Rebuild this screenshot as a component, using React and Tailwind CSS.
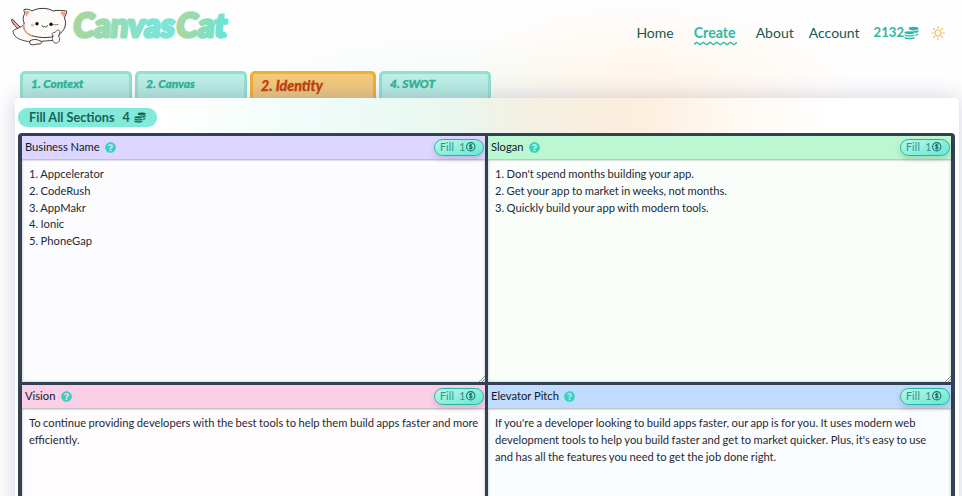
import React from "react";
import { FaQuestionCircle } from "react-icons/fa";

function Cat() {
  return (
    <svg viewBox="0 0 60 42" className="h-[42px] w-[60px] shrink-0" fill="#fdfbfa" stroke="#3f3232" strokeWidth="1" strokeLinejoin="round" strokeLinecap="round">
      <path d="M8 24C6 21 3 20 2.500 17C.5 15 1.500 13 3.500 15C5 18 7 18 10 22" fill="#f3b5a8" />
      <path d="M15 19C11 23 4 24 3 26C3 33 12 36 22 37L48 35L50 24Z" strokeWidth=".9" />
      <path d="M14 18C12 13 14 10 15 8C14 6 13.500 5 14 4.500C18 3.500 20 5 22 6C28 2.500 38 2.500 43 6C47 5 52 5.500 56.500 6C57 8 55 10 54.500 13C57 19 55 26 48 30C40 34 25 33 18 29C14 26 13 22 14 18Z" />
      <path d="M15 6L20 6.500L16 12Z" fill="#f79a88" stroke="none" />
      <path d="M55.500 7L50 7L54 12.500Z" fill="#f79a88" stroke="none" />
      <path d="M13.800 18C12.500 23 15 28 22 31.200" stroke="#f0937b" fill="none" strokeWidth="1.300" />
      <path d="M20 36C18 40 23 40.500 27 39C32 39.500 33 37 30 36C27 34 22 34 20 36Z" />
      <path d="M43 31C41 30 42 27 45 27.500C47 24 50 25 50 27L48.500 31C51 35 49 38.500 45 38C42 37 42 33 43 31Z" strokeWidth=".8" />
      <path d="M32 20.500C32.500 22.500 34 22.500 34.500 21C35.500 22.500 37 22.500 37.500 20.500" fill="none" strokeWidth=".9" />
      <path d="M41 20L48 19.500" fill="none" strokeWidth=".6" />
      <circle cx="27" cy="18.800" r="1.700" fill="#111" stroke="none" />
      <circle cx="41" cy="19.200" r="1.700" fill="#111" stroke="none" />
      <ellipse cx="22.500" cy="20" rx="2" ry="1.500" fill="#ffb7b3" stroke="none" />
    </svg>
  );
}

function Coins({ className }) {
  return (
    <svg viewBox="0 0 16 14" className={className} fill="currentColor">
      <ellipse cx="10.200" cy="2.300" rx="5.300" ry="1.900" />
      <path d="M15.600 3.800V5.200C15.300 6.200 13.800 6.800 12 7.100C11.500 6 10.200 5.400 8.500 5C11.500 5.300 14.500 4.800 15.600 3.800Z" />
      <path d="M15.300 7V8.300C15 9.200 13.800 9.900 12.200 10.200V8.600C13.600 8.300 14.800 7.700 15.300 7Z" />
      <ellipse cx="5.800" cy="6.700" rx="5.300" ry="1.500" />
      <path d="M.5 8.300C2.500 9.700 9.200 9.700 11.200 8.300V9.500C10 11.300 1.700 11.300 .5 9.500Z" />
      <path d="M.5 11.100C2.500 12.500 9.200 12.500 11.200 11.100V12.200C10 14.300 1.700 14.300 .5 12.200Z" />
    </svg>
  );
}

function Sun() {
  return (
    <svg viewBox="0 0 14 14" className="ml-[12px] size-[14px]" fill="none" stroke="#f2bc55" strokeWidth="1.100" strokeLinecap="round">
      <circle cx="7" cy="7" r="3" />
      <path d="M7 .6V2.200M7 11.800V13.400M.6 7H2.200M11.800 7H13.400M2.500 2.500L3.500 3.500M10.500 10.500L11.500 11.500M2.500 11.500L3.500 10.500M10.500 3.500L11.500 2.500" />
    </svg>
  );
}

function Coin() {
  return (
    <svg viewBox="0 0 16 16" className="size-[9.500px]" fill="none" stroke="#1d6f66" strokeWidth="1.800">
      <circle cx="8" cy="8" r="7" />
      <path d="M10.500 5.700C9.500 4.400 5.800 4.500 5.800 6.400C5.800 8.400 10.400 7.500 10.400 9.700C10.400 11.700 6.500 11.700 5.400 10.200M8 3.300V12.700" />
    </svg>
  );
}

function Logo() {
  return (
    <svg viewBox="0 0 164 44" className="h-11 w-[164px] overflow-visible">
      <defs>
        <linearGradient id="word" gradientUnits="userSpaceOnUse" x1="4" y1="0" x2="108" y2="0">
          <stop offset=".1" stopColor="#a8d6a0" />
          <stop offset=".75" stopColor="#7fe3d3" />
          <stop offset="1" stopColor="#7be5d8" />
        </linearGradient>
        <linearGradient id="word2" gradientUnits="userSpaceOnUse" x1="110" y1="0" x2="161" y2="0">
          <stop offset=".1" stopColor="#a5d8a4" />
          <stop offset="1" stopColor="#66e6d9" />
        </linearGradient>
      </defs>
      <g transform="skewX(-6)" fontFamily="Lato, sans-serif" fontWeight="900" fontSize="33" strokeWidth="3" strokeLinejoin="round">
        <text x="6" y="32.300" textLength="101" lengthAdjust="spacingAndGlyphs" fill="url(#word)" stroke="url(#word)">Canvas</text>
        <text x="109" y="32.300" textLength="50" lengthAdjust="spacingAndGlyphs" fill="url(#word2)" stroke="url(#word2)">Cat</text>
      </g>
    </svg>
  );
}

function Tab({ label, active }) {
  return (
    <div
      className={
        active
          ? "h-7 w-[126px] rounded-t-[5px] border-[3px] border-b-0 border-[#f0ad38] bg-linear-to-b from-[#f5cb7b] to-[#e9c47e] pt-[4px] pl-2 text-[14.200px] leading-[16px] font-black text-[#c2410c] italic [-webkit-text-stroke:0.300px_#c2410c]"
          : "h-7 w-[112px] rounded-t-[5px] border-[3px] border-b-0 border-[#91dfcf] bg-linear-to-b from-[#bdf1e8] to-[#b2e5dc] pt-[3px] pl-2 text-[11.900px] leading-[14px] font-black text-[#2cb596] italic [-webkit-text-stroke:0.300px_#2cb596]"
      }
    >
      {label}
    </div>
  );
}

function Section({ title, head, body, text, last }) {
  return (
    <section className="flex min-w-0 flex-col">
      <header className={"z-10 flex h-[23px] items-center pr-[1.500px] pb-px pl-[3px] shadow-[0_1px_2px_rgba(0,0,0,0.22)] " + head}>
        <h2 className="text-[11.200px] leading-4 text-[#111827]">{title}</h2>
        <FaQuestionCircle className="ml-[5.500px] size-[11px] text-[#35d2c0]" />
        <button className="ml-auto flex h-[17px] w-[50px] items-center rounded-full border-[1.500px] border-[#29b5a4] bg-linear-to-br from-[#b5f8e9] to-[#62e8d3] pl-[5.500px] text-[10.500px] leading-3 text-[#3a8f86] shadow-[0_3px_6px_rgba(0,0,0,0.14)]">
          <span className="mr-[5px] tracking-[0.200px]">Fill</span>
          <span className="mr-px">1</span>
          <Coin />
        </button>
      </header>
      <div className={"relative flex-1 pt-[7px] pl-[7px] text-[11.200px] leading-[16.800px] [word-spacing:-0.380px] whitespace-pre text-[#1f2937] shadow-[inset_0_0_3px_rgba(0,0,0,0.25)] " + body}>
        {text}
        {!last && (
          <svg viewBox="0 0 6 6" className="absolute right-0 bottom-0 size-[6px]" stroke="#777" strokeWidth=".8">
            <path d="M0 6L6 0M3 6L6 3" />
          </svg>
        )}
      </div>
    </section>
  );
}

export default function App() {
  return (
    <div className="flex h-[496px] w-[962px] flex-col overflow-hidden bg-[#fefefe] bg-[radial-gradient(ellipse_220px_110px_at_640px_110px,rgba(255,238,218,0.75),transparent),radial-gradient(ellipse_230px_100px_at_440px_130px,rgba(220,248,240,0.6),transparent)] font-['Lato',sans-serif]">
      <header className="flex h-[70px] shrink-0 items-start pl-[10px]">
        <div className="flex pt-[5px]">
          <Cat />
          <Logo />
        </div>
        <nav className="ml-auto flex h-[65px] items-center pr-[17px] text-[14px] text-[#19584f]">
          <a className="mr-5">Home</a>
          <a className="relative mr-5 text-[14.200px] font-bold text-[#2cbaa5]">
            Create
            <svg viewBox="0 0 43 5" className="absolute top-[19px] left-0 h-[5px] w-[43px]" fill="none" stroke="#2cbaa5" strokeWidth="1.400">
              <path d="M0 3.500L2.500 1.200L5.900 3.800L9.300 1.200L12.700 3.800L16.100 1.200L19.500 3.800L22.900 1.200L26.300 3.800L29.700 1.200L33.100 3.800L36.500 1.200L39.900 3.800L43 1.400" strokeLinejoin="round" />
            </svg>
          </a>
          <a className="mr-[15px]">About</a>
          <a className="mr-[14px]">Account</a>
          <span className="flex items-center pt-px text-[13.100px] font-bold text-[#2cb7a2]">2132<Coins className="h-[14px] w-[15px]" /></span>
          <Sun />
        </nav>
      </header>
      <div className="mt-px flex h-7 shrink-0 gap-[3px] pl-5">
        <Tab label="1. Context" />
        <Tab label="2. Canvas" />
        <Tab label="2. Identity" active />
        <Tab label="4. SWOT" />
      </div>
      <main className="-mt-px ml-[15px] flex h-[420px] w-[944px] shrink-0 flex-col rounded-[4px] bg-white bg-[linear-gradient(90deg,#fff_15%,#effcf9_32%,#e9f7f0_46%,#f4f0e2_55%,#fdeedd_66%,#fff9f2_76%,#fff_86%)] pl-[3px] shadow-[0_0_22px_rgba(75,70,140,0.25)]">
        <button className="mt-[10px] flex h-[19px] w-[139px] shrink-0 items-center rounded-[9px] bg-[#83ead9] pl-[11px] text-[12.700px] font-bold text-[#176358]">
          Fill All Sections <span className="ml-2">4</span><Coins className="ml-1 h-[11px] w-[12px]" />
        </button>
        <div className="mt-[6px] grid h-[500px] w-[937px] shrink-0 grid-cols-[463px_463px] grid-rows-[246px_246px] gap-[3px] rounded-[4px] border-4 border-t-[3px] border-[#334155] bg-[#334155]">
          <Section title="Business Name" head="bg-[#ddd6fe]" body="bg-[#fcfcff]" text={"1. Appcelerator\n2. CodeRush\n3. AppMakr\n4. Ionic\n5. PhoneGap"} />
          <Section title="Slogan" head="bg-[#bbf7d0]" body="bg-[#f9fefb]" text={"1. Don't spend months building your app.\n2. Get your app to market in weeks, not months.\n3. Quickly build your app with modern tools."} />
          <Section title="Vision" head="bg-[#fbcfe8]" body="bg-[#fffcfd]" text={"To continue providing developers with the best tools to help them build apps faster and more\nefficiently."} last />
          <Section title="Elevator Pitch" head="bg-[#bfdbfe]" body="bg-[#fafdff]" text={"If you're a developer looking to build apps faster, our app is for you. It uses modern web\ndevelopment tools to help you build faster and get to market quicker. Plus, it's easy to use\nand has all the features you need to get the job done right."} last />
        </div>
      </main>
    </div>
  );
}
